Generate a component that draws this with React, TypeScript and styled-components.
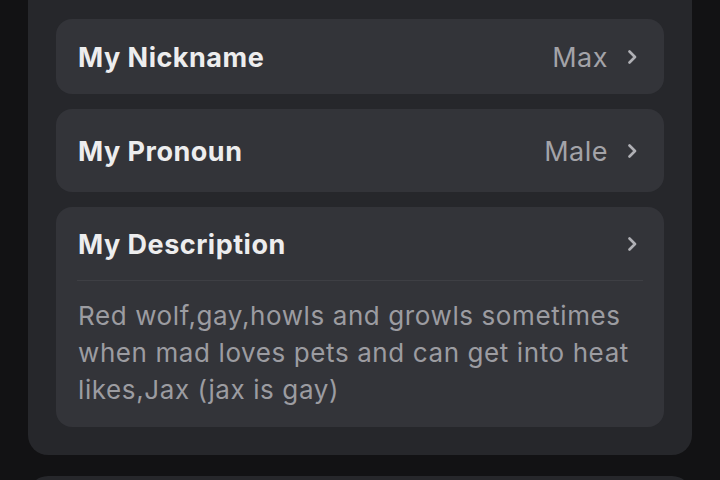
import React from "react";
import styled, { createGlobalStyle } from "styled-components";

const Global = createGlobalStyle`
  html, body { margin: 0; padding: 0; background: #121214; }
  body { font-family: Inter, "Open Sans", sans-serif; -webkit-font-smoothing: antialiased; }
`;

const Page = styled.div`
  width: 720px;
  height: 480px;
  overflow: hidden;
  display: flex;
  flex-direction: column;
  gap: 21px;
  padding: 0 28px;
  box-sizing: border-box;
`;

const Panel = styled.section`
  background: #26272b;
  border-radius: 0 0 20px 20px;
  padding: 19px 28px 28px;
  display: flex;
  flex-direction: column;
  gap: 15px;
`;

const NextPanel = styled.section`
  background: #26272b;
  border-radius: 20px 20px 0 0;
  height: 40px;
  flex-shrink: 0;
`;

const Card = styled.div`
  background: #333439;
  border-radius: 16px;
  display: flex;
  flex-direction: column;
`;

const Row = styled.div<{ $h: number }>`
  height: ${(p) => p.$h}px;
  display: flex;
  align-items: center;
  padding: 0 27px 0 22px;
`;

const Title = styled.div`
  flex: 1;
  color: #ededee;
  font-weight: 700;
  font-size: 27px;
  letter-spacing: 0.5px;
  padding-top: 2px;
`;

const Value = styled.div`
  color: #a3a3a8;
  font-size: 27px;
  font-weight: 400;
  letter-spacing: 0.5px;
  margin-right: 19px;
  padding-top: 2px;
`;

const Divider = styled.div`
  height: 1px;
  background: #3e3f44;
  margin: 0 21px;
`;

const Description = styled.p`
  margin: 0;
  padding: 16px 22px 19px;
  color: #9c9ca1;
  font-size: 26px;
  letter-spacing: 0.6px;
  line-height: 37px;
`;

const Chevron = () => (
  <svg width="10" height="14" viewBox="0 0 10 14" fill="none">
    <path d="M2.5 1.5 L8 7 L2.5 12.5" stroke="#b0b0b5" strokeWidth="2.6" strokeLinecap="round" strokeLinejoin="round" />
  </svg>
);

export default function App() {
  return (
    <>
      <Global />
      <Page>
        <Panel>
          <Card>
            <Row $h={75}>
              <Title>My Nickname</Title>
              <Value>Max</Value>
              <Chevron />
            </Row>
          </Card>
          <Card>
            <Row $h={83}>
              <Title>My Pronoun</Title>
              <Value>Male</Value>
              <Chevron />
            </Row>
          </Card>
          <Card>
            <Row $h={73}>
              <Title>My Description</Title>
              <Chevron />
            </Row>
            <Divider />
            <Description>
              Red wolf,gay,howls and growls sometimes when mad loves pets and can get into heat likes,Jax (jax is gay)
            </Description>
          </Card>
        </Panel>
        <NextPanel />
      </Page>
    </>
  );
}
